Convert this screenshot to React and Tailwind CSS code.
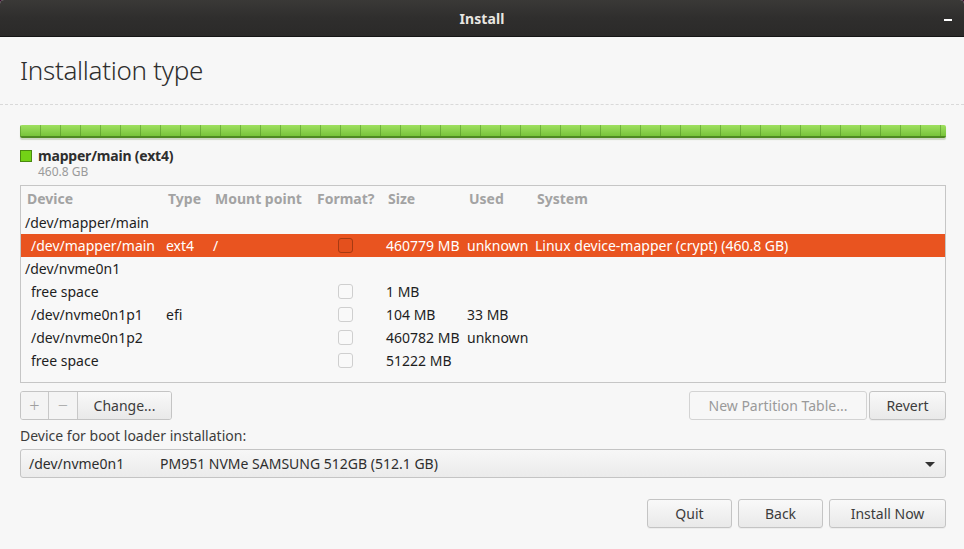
import React from "react";

const cols = "grid grid-cols-[145px_47px_102px_71px_81px_68px_1fr] items-center";

function Check({ dark }) {
  return (
    <div
      className={
        "w-[15px] h-[15px] rounded-[3px] border " +
        (dark ? "border-[#a63a12] bg-[#e4501d]" : "border-[#cfcfcf] bg-[#f9f9f9]")
      }
    />
  );
}

function Row({ dev, type = "", mount = "", size, used = "", system = "", selected, parent }) {
  if (parent) {
    return (
      <div className="h-[23px] flex items-center pl-[4px] text-[#1e1e1e]">{dev}</div>
    );
  }
  return (
    <div
      className={
        cols +
        " h-[23px] " +
        (selected ? "bg-[#e95420] text-white" : "text-[#1e1e1e]")
      }
    >
      <div className="pl-[10px] whitespace-nowrap">{dev}</div>
      <div>{type}</div>
      <div>{mount}</div>
      <div className="pl-[23px]">
        <Check dark={selected} />
      </div>
      <div className="whitespace-nowrap">{size}</div>
      <div className="whitespace-nowrap">{used}</div>
      <div className="whitespace-nowrap">{system}</div>
    </div>
  );
}

function Btn({ children, className = "", disabled }) {
  return (
    <div
      className={
        "h-[29px] flex items-center justify-center rounded-[3px] border text-[14px] " +
        (disabled
          ? "border-[#d3d3d3] bg-[#f7f7f7] text-[#9a9a9a]"
          : "border-[#c4c4c4] bg-gradient-to-b from-[#f9f9f9] to-[#e9e9e9] text-[#3c3c3c] shadow-[0_1px_0_rgba(0,0,0,0.04)]") +
        " " +
        className
      }
    >
      {children}
    </div>
  );
}

export default function App() {
  return (
    <div
      className="w-[964px] h-[549px] bg-[#3a0d2e] overflow-hidden"
      style={{ fontFamily: '"Noto Sans", "Open Sans", sans-serif' }}
    >
      <div className="w-full h-full rounded-t-[4px] overflow-hidden flex flex-col bg-[#f7f7f7]">
        {/* title bar */}
        <div className="h-[37px] shrink-0 bg-gradient-to-b from-[#3a3937] via-[#2f2e2d] to-[#2b2a29] border-b border-[#161616] relative flex items-center justify-center">
          <span className="text-[14px] font-bold text-[#e8e6e1] tracking-[0.1px]">Install</span>
          <div className="absolute left-[944px] top-[19px] w-[8px] h-[2px] bg-white" />
        </div>

        {/* heading */}
        <div className="h-[68px] shrink-0 flex items-center pl-[20px] border-b border-dashed border-[#d9d9d9]">
          <span className="text-[26px] font-light text-[#2e2e2e] tracking-[-0.3px] mt-[-1px]">
            Installation type
          </span>
        </div>

        <div className="pl-[20px] pr-[18px] pt-[20px] flex flex-col">
          {/* partition bar */}
          <div className="h-[13px] rounded-[2px] bg-gradient-to-b from-[#9fe05f] to-[#78c43a] border-b-[2px] border-[#4f8a22] relative overflow-hidden shadow-[0_2px_1px_rgba(80,120,40,0.25)]">
            <div
              className="absolute inset-0"
              style={{
                backgroundImage:
                  "repeating-linear-gradient(90deg, rgba(70,130,30,0.45) 0px, rgba(70,130,30,0.45) 1px, transparent 1px, transparent 20px)",
              }}
            />
          </div>

          {/* legend */}
          <div className="flex mt-[10px] h-[31px]">
            <div className="w-[12px] h-[12px] bg-[#73d216] border border-[#4a8a10] mt-[2px]" />
            <div className="ml-[6px] flex flex-col">
              <span className="text-[14px] font-bold text-[#2e2e2e] leading-[15px] tracking-[-0.2px]">mapper/main (ext4)</span>
              <span className="text-[12px] text-[#9a9a9a] leading-[13px] mt-[2px]">460.8 GB</span>
            </div>
          </div>

          {/* table */}
          <div className="mt-[6px] h-[198px] border border-[#c6c6c6] bg-[#f8f8f8] text-[14px] flex flex-col">
            <div className={cols + " h-[25px] pl-[2px] font-bold text-[#a3a3a3]"}>
              <div className="pl-[4px]">Device</div>
              <div>Type</div>
              <div>Mount point</div>
              <div>Format?</div>
              <div>Size</div>
              <div>Used</div>
              <div>System</div>
            </div>
            <Row parent dev="/dev/mapper/main" />
            <Row
              selected
              dev="/dev/mapper/main"
              type="ext4"
              mount="/"
              size="460779 MB"
              used="unknown"
              system="Linux device-mapper (crypt) (460.8 GB)"
            />
            <Row parent dev="/dev/nvme0n1" />
            <Row dev="free space" size="1 MB" />
            <Row dev="/dev/nvme0n1p1" type="efi" size="104 MB" used="33 MB" />
            <Row dev="/dev/nvme0n1p2" size="460782 MB" used="unknown" />
            <Row dev="free space" size="51222 MB" />
          </div>

          {/* buttons row */}
          <div className="mt-[8px] flex items-center">
            <div className="flex h-[29px] rounded-[3px] border border-[#c4c4c4] overflow-hidden text-[14px] text-[#3c3c3c]">
              <div className="w-[28px] flex items-center justify-center bg-[#f4f4f4] text-[#a0a0a0] text-[18px] font-light border-r border-[#c8c8c8]">+</div>
              <div className="w-[29px] flex items-center justify-center bg-[#f4f4f4] text-[#a0a0a0] text-[18px] font-light border-r border-[#c8c8c8]">−</div>
              <div className="w-[93px] flex items-center justify-center bg-gradient-to-b from-[#f9f9f9] to-[#e9e9e9]">Change...</div>
            </div>
            <div className="flex-1" />
            <Btn disabled className="w-[178px]">New Partition Table...</Btn>
            <Btn className="w-[77px] ml-[2px]">Revert</Btn>
          </div>

          <div className="mt-[6px] text-[14px] text-[#3c3c3c] leading-[20px]">Device for boot loader installation:</div>

          {/* combo */}
          <div className="mt-[3px] h-[29px] rounded-[3px] border border-[#c4c4c4] bg-gradient-to-b from-[#f7f7f7] to-[#ebebeb] flex items-center text-[14px] text-[#2e2e2e] relative">
            <span className="pl-[8px] w-[139px]">/dev/nvme0n1</span>
            <span>PM951 NVMe SAMSUNG 512GB (512.1 GB)</span>
            <div className="absolute right-[10px] top-[12px] w-0 h-0 border-l-[5px] border-r-[5px] border-t-[5px] border-l-transparent border-r-transparent border-t-[#333]" />
          </div>

          {/* bottom buttons */}
          <div className="mt-[21px] flex justify-end gap-[6px]">
            <Btn className="w-[85px]">Quit</Btn>
            <Btn className="w-[85px]">Back</Btn>
            <Btn className="w-[117px]">Install Now</Btn>
          </div>
        </div>
      </div>
    </div>
  );
}
